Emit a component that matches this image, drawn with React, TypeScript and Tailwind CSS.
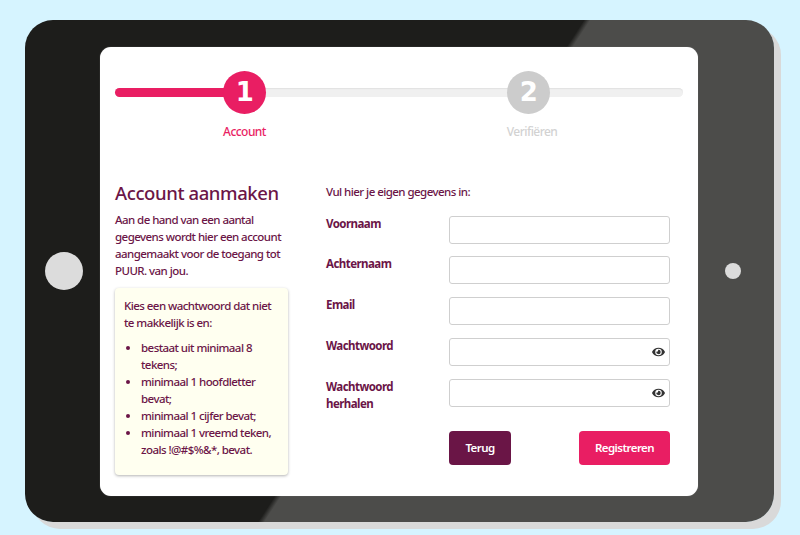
import { FaEye } from 'react-icons/fa';

const fields = [
  { label: 'Voornaam' },
  { label: 'Achternaam' },
  { label: 'Email' },
  { label: 'Wachtwoord', secret: true },
  { label: 'Wachtwoord herhalen', secret: true },
];

const rules = [
  'bestaat uit minimaal 8 tekens;',
  'minimaal 1 hoofdletter bevat;',
  'minimaal 1 cijfer bevat;',
  'minimaal 1 vreemd teken, zoals !@#$%&*, bevat.',
];

const Stepper = () => (
  <div className="relative h-[70px]">
    {/* Track sits behind the two circles */}
    <div className="absolute left-0 right-0 top-[17px] h-[9px] rounded-full bg-[#f0f0f0] shadow-[inset_0_1px_1px_#e2e2e2]" />
    <div className="absolute left-0 top-[17px] h-[9px] w-[130px] rounded-l-full bg-[#e91e63]" />
    <div className="relative flex gap-[241px] pl-[108px]">
      <div className="flex w-[43px] flex-col items-center">
        <div className="flex h-[43px] w-[43px] items-center justify-center rounded-full bg-[#e91e63] font-['DejaVu_Sans',sans-serif] text-[26px] font-bold leading-none text-white">
          1
        </div>
        <span className="mt-[9px] whitespace-nowrap text-[12px] leading-[17px] text-[#e91e63]">Account</span>
      </div>
      <div className="flex w-[43px] flex-col items-center">
        <div className="flex h-[43px] w-[43px] items-center justify-center rounded-full bg-[#cccccc] font-['DejaVu_Sans',sans-serif] text-[26px] font-bold leading-none text-white">
          2
        </div>
        <span className="ml-[7px] mt-[9px] whitespace-nowrap text-[12px] font-medium leading-[17px] text-[#d2d2d2]">Verifiëren</span>
      </div>
    </div>
  </div>
);

export default function App() {
  return (
    <div className="h-[535px] w-[800px] overflow-hidden bg-[#d6f4ff] pl-[25px] pt-[20px] font-['Noto_Sans',sans-serif] text-[11.5px] font-medium leading-[17px] tracking-[-0.55px] text-[#6b1547]">
      <div className="flex h-[502px] w-[749px] items-center rounded-[28px] bg-[linear-gradient(123deg,#1d1d1b_52%,#4c4c4a_52.6%)] shadow-[7px_7px_0_#d9d9d9]">
        <div className="flex w-[75px] justify-center">
          <div className="ml-[3px] h-[38px] w-[38px] rounded-full bg-[#dcdcdc]" />
        </div>

        <div className="h-[449px] w-[598px] rounded-[11px] bg-white px-[15px] pt-[24px] shadow-[0_0_1px_#888]">
          <Stepper />

          <div className="mt-[39px] flex">
            <div className="w-[173px]">
              <h1 className="text-[18.5px] font-medium leading-[26px] tracking-[-0.4px]">Account aanmaken</h1>
              <p className="mt-[5px]">Aan de hand van een aantal gegevens wordt hier een account aangemaakt voor de toegang tot PUUR. van jou.</p>
              <div className="mt-[9px] h-[187px] rounded-[4px] bg-[#fffff0] px-[9px] pt-[9px] shadow-[0_1px_3px_rgba(0,0,0,0.3)]">
                <p>Kies een wachtwoord dat niet te makkelijk is en:</p>
                <ul className="mt-[8px] list-disc pl-[17px]">
                  {rules.map((rule) => (
                    <li key={rule}>{rule}</li>
                  ))}
                </ul>
              </div>
            </div>

            <div className="ml-[38px] w-[344px]">
              <p className="mt-[3px]">Vul hier je eigen gegevens in:</p>
              <div className="mt-[16px] flex flex-col gap-[12.75px]">
                {fields.map((field) => (
                  <div key={field.label} className="flex">
                    <label className="-mt-px w-[123px] pr-[30px] font-bold">{field.label}</label>
                    <div className="relative">
                      <input
                        type={field.secret ? 'password' : 'text'}
                        className="block h-[28px] w-[221px] rounded-[3px] border border-[#cfcfcf] bg-white"
                      />
                      {field.secret && <FaEye className="absolute right-[5px] top-[8px] h-[12px] w-[13px] text-[#333333]" />}
                    </div>
                  </div>
                ))}
              </div>
              <div className="ml-[123px] mt-[19px] flex justify-between">
                <button className="h-[34px] w-[62px] rounded-[4px] bg-[#6a1546] font-semibold text-white">Terug</button>
                <button className="h-[34px] w-[91px] rounded-[4px] bg-[#e91e63] font-semibold text-white">Registreren</button>
              </div>
            </div>
          </div>
        </div>

        <div className="flex w-[76px] justify-center">
          <div className="mr-[6px] h-[16px] w-[16px] rounded-full bg-[#dcdcdc]" />
        </div>
      </div>
    </div>
  );
}
